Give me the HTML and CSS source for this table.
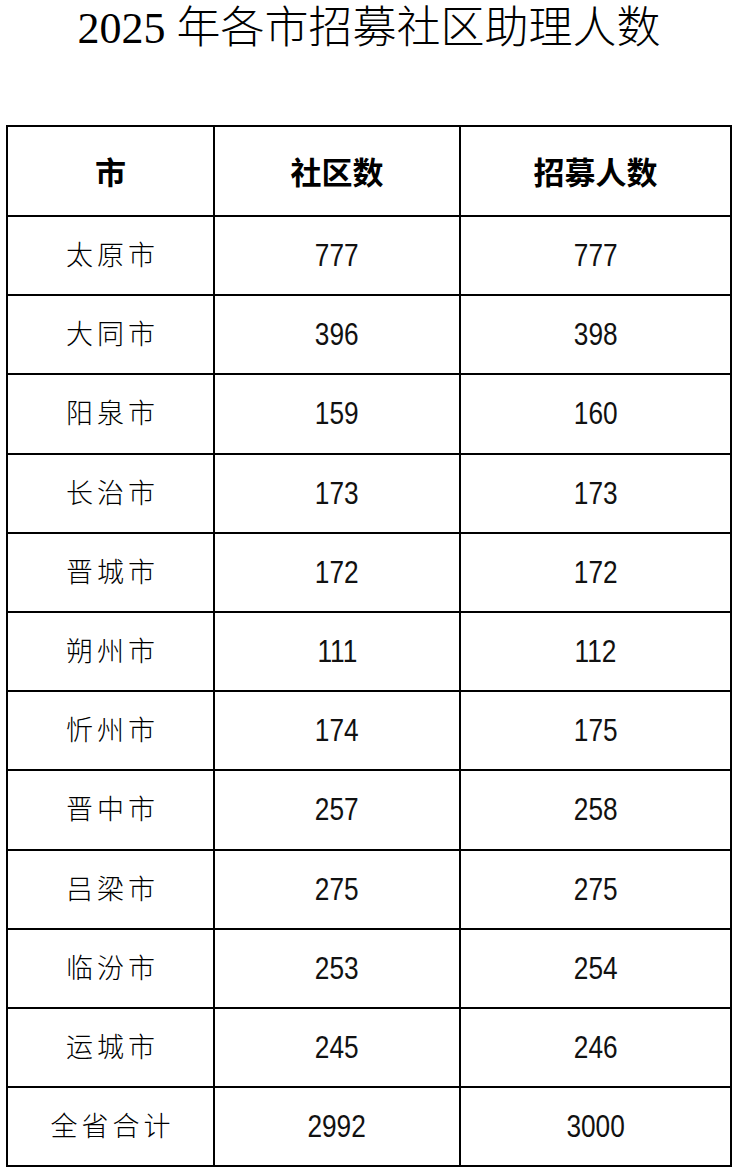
FILE: index.html
```html
<!DOCTYPE html>
<html lang="zh-CN">
<head>
<meta charset="utf-8">
<title>2025年各市招募社区助理人数</title>
<link rel="stylesheet" href="styles.css">
</head>
<body>
<h1 class="title">2025 年各市招募社区助理人数</h1>
<table class="data">
  <colgroup>
    <col class="c1"><col class="c2"><col class="c3">
  </colgroup>
  <thead>
    <tr><th>市</th><th>社区数</th><th>招募人数</th></tr>
  </thead>
  <tbody>
    <tr><td class="city">太原市</td><td class="n"><span>777</span></td><td class="n"><span>777</span></td></tr>
    <tr><td class="city">大同市</td><td class="n"><span>396</span></td><td class="n"><span>398</span></td></tr>
    <tr><td class="city">阳泉市</td><td class="n"><span>159</span></td><td class="n"><span>160</span></td></tr>
    <tr><td class="city">长治市</td><td class="n"><span>173</span></td><td class="n"><span>173</span></td></tr>
    <tr><td class="city">晋城市</td><td class="n"><span>172</span></td><td class="n"><span>172</span></td></tr>
    <tr><td class="city">朔州市</td><td class="n"><span>111</span></td><td class="n"><span>112</span></td></tr>
    <tr><td class="city">忻州市</td><td class="n"><span>174</span></td><td class="n"><span>175</span></td></tr>
    <tr><td class="city">晋中市</td><td class="n"><span>257</span></td><td class="n"><span>258</span></td></tr>
    <tr><td class="city">吕梁市</td><td class="n"><span>275</span></td><td class="n"><span>275</span></td></tr>
    <tr><td class="city">临汾市</td><td class="n"><span>253</span></td><td class="n"><span>254</span></td></tr>
    <tr><td class="city">运城市</td><td class="n"><span>245</span></td><td class="n"><span>246</span></td></tr>
    <tr><td class="city">全省合计</td><td class="n"><span>2992</span></td><td class="n"><span>3000</span></td></tr>
  </tbody>
</table>
</body>
</html>
```
FILE: styles.css
```css
html, body {
  margin: 0;
  padding: 0;
  background: #ffffff;
  color: #000000;
}

.title {
  margin: 0;
  padding: 0;
  height: 125px;
  box-sizing: border-box;
  text-align: center;
  white-space: nowrap;
  font-family: "Liberation Serif", "Noto Sans CJK SC", serif;
  font-weight: 300;
  font-size: 44px;
  line-height: 58px;
}

.data {
  margin-left: 6px;
  width: 724px;
  border-collapse: collapse;
  table-layout: fixed;
}

.c1 { width: 207px; }
.c2 { width: 246px; }
.c3 { width: 271px; }

.data th,
.data td {
  border: 2px solid #000;
  padding: 0;
  text-align: center;
  vertical-align: middle;
}

.data th {
  height: 86px;
  padding-bottom: 2px;
  font-family: "Noto Sans CJK SC", sans-serif;
  font-weight: 700;
  font-size: 31px;
}

.data td {
  height: 77.2px;
}

.data td.city {
  height: 73.2px;
  padding-bottom: 4px;
  font-family: "Noto Sans CJK SC", sans-serif;
  font-weight: 300;
  font-size: 27px;
  letter-spacing: 4px;
  text-indent: 4px;
}

.n {
  font-family: "Liberation Sans", Arial, sans-serif;
  font-size: 32px;
  font-weight: 400;
}

.n span {
  display: inline-block;
  transform: scaleX(0.82);
  color: #111;
}
```
